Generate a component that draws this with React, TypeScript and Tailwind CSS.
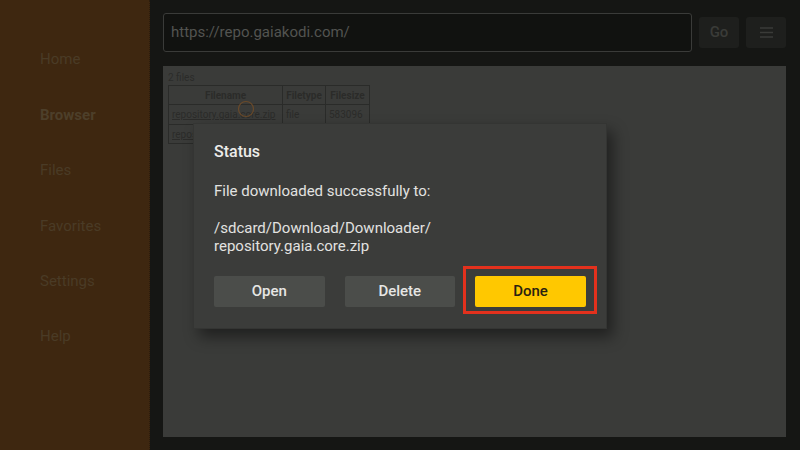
const navItems = ["Home", "Browser", "Files", "Favorites", "Settings", "Help"];

function Sidebar() {
  return (
    <aside className="flex h-full w-[150px] shrink-0 flex-col border-r border-dotted border-[#2c1c0c] bg-[#3e2710] pt-[32px]">
      {navItems.map((item) => (
        <div
          key={item}
          className={`flex h-[55.4px] items-center pl-[40px] text-[15px] ${
            item === "Browser" ? "font-bold text-[#4d3f2a]" : "text-[#4a3b26]"
          }`}
        >
          {item}
        </div>
      ))}
    </aside>
  );
}

function FileTable() {
  return (
    <div className="px-[5px] pt-[6px] text-[#2b2b29]">
      <p className="text-[10px] leading-[12px]">2 files</p>
      <table className="mt-[1px] border-collapse text-[10px]">
        <thead>
          <tr className="h-[19px]">
            <th className="w-[114px] border border-[#2a2b29] font-bold">Filename</th>
            <th className="w-[43px] border border-[#2a2b29] font-bold">Filetype</th>
            <th className="w-[44px] border border-[#2a2b29] font-bold">Filesize</th>
          </tr>
        </thead>
        <tbody>
          <tr className="h-[20px]">
            <td className="border border-[#2a2b29] px-[3px] underline">repository.gaia.core.zip</td>
            <td className="border border-[#2a2b29] px-[3px]">file</td>
            <td className="border border-[#2a2b29] px-[3px]">583096</td>
          </tr>
          <tr className="h-[19px]">
            <td className="border border-[#2a2b29] px-[3px] underline">repository.gaia.zip</td>
            <td className="border border-[#2a2b29] px-[3px]">file</td>
            <td className="border border-[#2a2b29] px-[3px]">4812</td>
          </tr>
        </tbody>
      </table>
    </div>
  );
}

function StatusDialog() {
  return (
    <div className="absolute left-[193px] top-[123px] w-[414px] border border-[#343533] bg-[#3b3c3a] px-[20px] pb-[21px] pt-[17px] shadow-[6px_8px_14px_rgba(0,0,0,0.45)]">
      <h2 className="text-[16px] font-medium leading-[22px] text-[#ececea]">Status</h2>
      <p className="mt-[19px] text-[15px] leading-[18px] text-[#e2e2e0]">
        File downloaded successfully to:
      </p>
      <p className="mt-[19px] text-[15px] leading-[18px] text-[#e2e2e0]">
        /sdcard/Download/Downloader/
        <br />
        repository.gaia.core.zip
      </p>
      <div className="mt-[21px] flex items-center">
        <button className="h-[31px] w-[111px] rounded-[2px] bg-[#4b4d4a] text-[15px] font-medium text-[#e6e6e4]">
          Open
        </button>
        <button className="ml-[20px] h-[31px] w-[111px] rounded-[2px] bg-[#4b4d4a] text-[15px] font-medium text-[#e6e6e4]">
          Delete
        </button>
        <div className="relative ml-[20px]">
          <div className="absolute -bottom-[7px] -left-[12px] -right-[11px] -top-[10px] border-[3px] border-[#e3311d]" />
          <button className="relative h-[31px] w-[111px] rounded-[2px] bg-[#ffc800] text-[15px] font-medium text-[#2a2210]">
            Done
          </button>
        </div>
      </div>
    </div>
  );
}

export default function App() {
  return (
    <div
      className="relative flex h-[450px] w-[800px] overflow-hidden bg-[#151614]"
      style={{ fontFamily: "Roboto, 'Noto Sans', sans-serif" }}
    >
      <Sidebar />
      <main className="flex flex-1 flex-col pb-[13px] pl-[13px] pr-[14px] pt-[13px]">
        <div className="flex items-center gap-[7px]">
          <div className="flex h-[39px] flex-1 items-center rounded-[3px] border border-[#3a3b39] bg-[#111210] pl-[7px] text-[15px] text-[#535451]">
            https://repo.gaiakodi.com/
          </div>
          <button className="h-[31px] w-[40px] rounded-[3px] bg-[#1e1f1d] text-[15px] font-medium text-[#3a3b38]">
            Go
          </button>
          <button className="flex h-[31px] w-[40px] items-center justify-center rounded-[3px] bg-[#1e1f1d]">
            <svg width="13" height="11" viewBox="0 0 13 11">
              <path d="M0 1h13M0 5.5h13M0 10h13" stroke="#3a3b38" strokeWidth="1.6" />
            </svg>
          </button>
        </div>
        <section className="relative mt-[14px] flex-1 bg-[#3a3b39]">
          <FileTable />
          <svg className="absolute left-[74px] top-[34px]" width="18" height="18" viewBox="0 0 18 18">
            <circle cx="9" cy="9" r="7.5" fill="none" stroke="#6a4a2a" strokeWidth="1.2" />
          </svg>
        </section>
      </main>
      <StatusDialog />
    </div>
  );
}
